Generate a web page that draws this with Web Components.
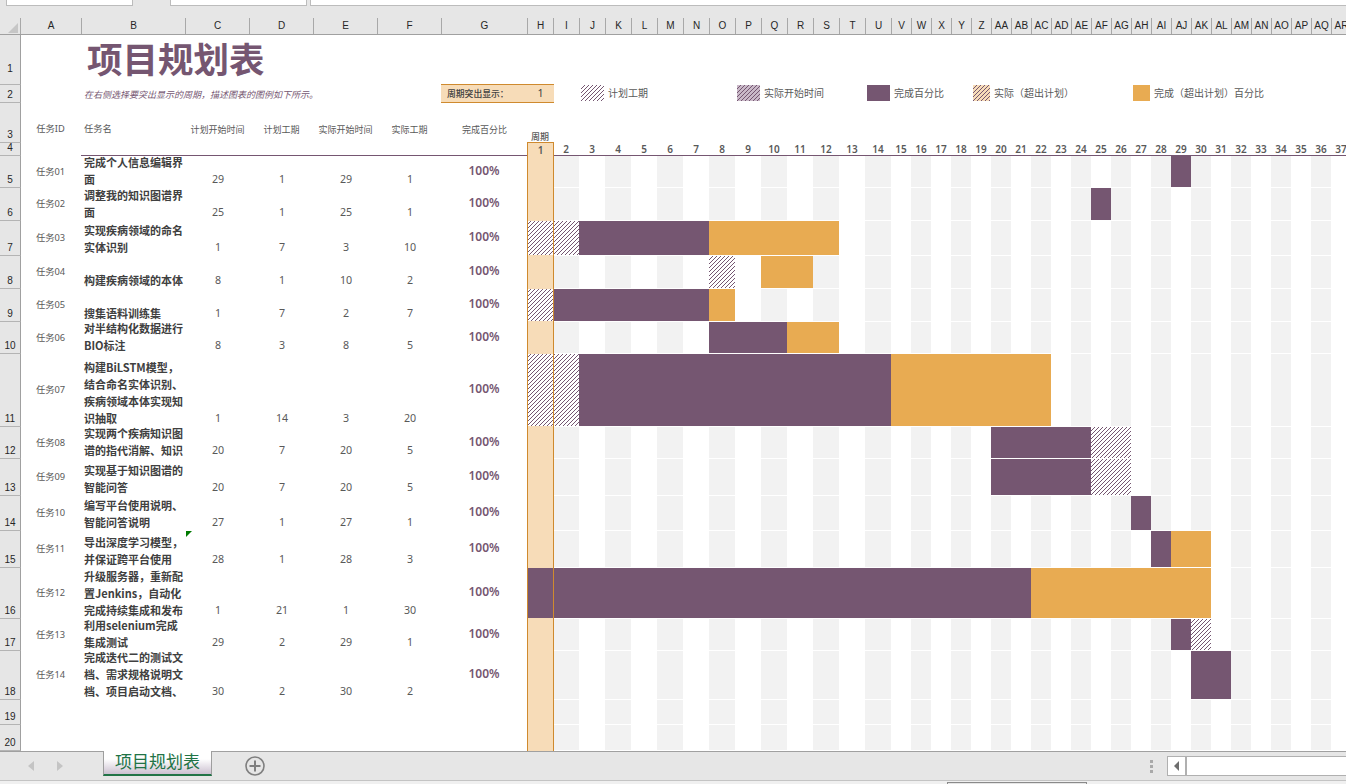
<!DOCTYPE html>
<html lang="zh">
<head>
<meta charset="utf-8">
<title>项目规划表</title>
<style>
    html, body { margin: 0; padding: 0; background: #fff; }
</style>
</head>
<body>
<sheet-app>
    <formula-strip></formula-strip>
    <column-header></column-header>

    <sheet-row num="1" h="50" label-pad="9">
        <sheet-cell col="3" kind="title">项目规划表</sheet-cell>
    </sheet-row>
    <sheet-row num="2" h="18">
        <sheet-cell col="3" kind="note">在右侧选择要突出显示的周期，描述图表的图例如下所示。</sheet-cell>
        <period-picker style="grid-column: 8 / span 2"></period-picker>
        <legend-item col="11" swatch="plan" w="23">计划工期</legend-item>
        <legend-item col="17" swatch="actual" w="23">实际开始时间</legend-item>
        <legend-item col="22" swatch="done" w="23">完成百分比</legend-item>
        <legend-item col="27" swatch="over" w="17">实际（超出计划）</legend-item>
        <legend-item col="35" swatch="overdone" w="17">完成（超出计划）百分比</legend-item>
    </sheet-row>
    <sheet-row num="3" h="40">
        <sheet-cell col="2" kind="head" align="center">任务ID</sheet-cell>
        <sheet-cell col="3" kind="head" align="left">任务名</sheet-cell>
        <sheet-cell col="4" kind="head2" align="center">计划开始时间</sheet-cell>
        <sheet-cell col="5" kind="head2" align="center">计划工期</sheet-cell>
        <sheet-cell col="6" kind="head2" align="center">实际开始时间</sheet-cell>
        <sheet-cell col="7" kind="head2" align="center">实际工期</sheet-cell>
        <sheet-cell col="8" kind="head2" align="center">完成百分比</sheet-cell>
        <sheet-cell col="9" kind="axis-title" align="center">周期</sheet-cell>
    </sheet-row>
    <sheet-row num="4" h="13">
        <period-axis style="grid-column: 3 / -1"></period-axis>
    </sheet-row>

    <gantt-row num="5" h="32" task="任务01" plan="29" dur="1" start="29" real="1" bars="solid:29-29">完成个人信息编辑界<br>面</gantt-row>
    <gantt-row num="6" h="33" task="任务02" plan="25" dur="1" start="25" real="1" bars="solid:25-25">调整我的知识图谱界<br>面</gantt-row>
    <gantt-row num="7" h="35" task="任务03" plan="1" dur="7" start="3" real="10" bars="hatch:1-2 solid:3-7 over:8-12">实现疾病领域的命名<br>实体识别</gantt-row>
    <gantt-row num="8" h="33" task="任务04" plan="8" dur="1" start="10" real="2" bars="hatch:8-8 over:10-11">构建疾病领域的本体</gantt-row>
    <gantt-row num="9" h="33" task="任务05" plan="1" dur="7" start="2" real="7" bars="hatch:1-1 solid:2-7 over:8-8">搜集语料训练集</gantt-row>
    <gantt-row num="10" h="32" task="任务06" plan="8" dur="3" start="8" real="5" bars="solid:8-10 over:11-12">对半结构化数据进行<br>BIO标注</gantt-row>
    <gantt-row num="11" h="73" task="任务07" plan="1" dur="14" start="3" real="20" bars="hatch:1-2 solid:3-14 over:15-22">构建BiLSTM模型，<br>结合命名实体识别、<br>疾病领域本体实现知<br>识抽取</gantt-row>
    <gantt-row num="12" h="32" task="任务08" plan="20" dur="7" start="20" real="5" bars="solid:20-24 hatch:25-26">实现两个疾病知识图<br>谱的指代消解、知识</gantt-row>
    <gantt-row num="13" h="37" task="任务09" plan="20" dur="7" start="20" real="5" bars="solid:20-24 hatch:25-26">实现基于知识图谱的<br>智能问答</gantt-row>
    <gantt-row num="14" h="35" task="任务10" plan="27" dur="1" start="27" real="1" bars="solid:27-27">编写平台使用说明、<br>智能问答说明</gantt-row>
    <gantt-row num="15" h="37" task="任务11" plan="28" dur="1" start="28" real="3" bars="solid:28-28 over:29-30" flagged>导出深度学习模型，<br>并保证跨平台使用</gantt-row>
    <gantt-row num="16" h="51" task="任务12" plan="1" dur="21" start="1" real="30" bars="solid:1-21 over:22-30">升级服务器，重新配<br>置Jenkins，自动化<br>完成持续集成和发布</gantt-row>
    <gantt-row num="17" h="32" task="任务13" plan="29" dur="2" start="29" real="1" bars="solid:29-29 hatch:30-30">利用selenium完成<br>集成测试</gantt-row>
    <gantt-row num="18" h="49" task="任务14" plan="30" dur="2" start="30" real="2" bars="solid:30-31">完成迭代二的测试文<br>档、需求规格说明文<br>档、项目启动文档、</gantt-row>
    <gantt-row num="19" h="25" empty></gantt-row>
    <gantt-row num="20" h="26" empty></gantt-row>

    <sheet-tabs></sheet-tabs>
</sheet-app>

<script>
// Excel style gantt sheet

const FONT = '"Noto Sans", "Noto Sans CJK SC", sans-serif';
const PURPLE = '#755671';
const ORANGE = '#e8ab52';
const PEACH = '#f7dcb8';
const EDGE = '#cf8a2e';

// 4px stair pattern used by every hatched fill
function hatchSvg(bg) {
    return `
        <svg width="100%" height="100%" style="display:block" shape-rendering="crispEdges">
            <defs>
                <pattern id="h" width="4" height="4" patternUnits="userSpaceOnUse">
                    <rect width="4" height="4" fill="${bg}"/>
                    <rect x="3" y="0" width="1" height="1" fill="${PURPLE}"/>
                    <rect x="2" y="1" width="1" height="1" fill="${PURPLE}"/>
                    <rect x="1" y="2" width="1" height="1" fill="${PURPLE}"/>
                    <rect x="0" y="3" width="1" height="1" fill="${PURPLE}"/>
                </pattern>
            </defs>
            <rect width="100%" height="100%" fill="url(#h)"/>
        </svg>`;
}

class SheetApp extends HTMLElement {
    constructor() {
        super();
        this.attachShadow({ mode: 'open' });
        this.shadowRoot.innerHTML = `
            <style>
                :host {
                    --track: repeat(14, 26px) repeat(23, 20px);
                    --cols: 20px 61px 104px 64px 64px 64px 64px 86px var(--track);
                    display: flex;
                    flex-direction: column;
                    width: 1346px;
                    height: 784px;
                    overflow: hidden;
                    background: #fff;
                    font-family: ${FONT};
                    color: #595959;
                }
            </style>
            <slot></slot>
        `;
    }
}

class FormulaStrip extends HTMLElement {
    constructor() {
        super();
        this.attachShadow({ mode: 'open' });
        this.shadowRoot.innerHTML = `
            <style>
                :host {
                    display: flex;
                    flex: none;
                    height: 18px;
                    background: #e6e6e6;
                    align-items: flex-start;
                }
                div {
                    height: 5px;
                    background: #fff;
                    border: 1px solid #bcbcbc;
                    border-top: none;
                    box-sizing: content-box;
                }
                .name { margin-left: 6px; width: 125px; }
                .fx { margin-left: 37px; width: 135px; }
                .input { margin-left: 3px; flex: 1; border-right: none; }
            </style>
            <div class="name"></div><div class="fx"></div><div class="input"></div>
        `;
    }
}

class ColumnHeader extends HTMLElement {
    constructor() {
        super();
        this.attachShadow({ mode: 'open' });
        const names = [];
        for (let i = 0; i < 44; i++) {
            names.push(i < 26 ? String.fromCharCode(65 + i) : 'A' + String.fromCharCode(65 + i - 26));
        }
        this.shadowRoot.innerHTML = `
            <style>
                :host {
                    display: grid;
                    flex: none;
                    grid-template-columns: var(--cols);
                    height: 17px;
                    background: #e6e6e6;
                    border-bottom: 1px solid #a0a0a0;
                    box-sizing: border-box;
                    font: 10px/16px "Liberation Sans", Arial, sans-serif;
                    color: #262626;
                }
                .corner { position: relative; }
                .corner svg { position: absolute; left: 8px; top: 5px; }
                span {
                    text-align: center;
                    border-left: 1px solid #a8a8a8;
                    white-space: nowrap;
                }
            </style>
            <div class="corner"><svg width="10" height="10"><polygon points="10,0 10,10 0,10" fill="#c6c6c6"/></svg></div>
            ${names.map(n => `<span>${n}</span>`).join('')}
        `;
    }
}

// One sheet row: the grey row number plus grid cells passed in by slot
class SheetRow extends HTMLElement {
    constructor() {
        super();
        this.attachShadow({ mode: 'open' });
    }

    connectedCallback() {
        const h = this.getAttribute('h');
        const pad = this.getAttribute('label-pad') || 1;
        this.shadowRoot.innerHTML = `
            <style>
                :host {
                    display: grid;
                    flex: none;
                    grid-template-columns: var(--cols);
                    grid-template-rows: ${h}px;
                    height: ${h}px;
                }
                .num {
                    grid-column: 1;
                    grid-row: 1;
                    width: 21px;
                    box-sizing: border-box;
                    background: #e6e6e6;
                    border-right: 1px solid #a0a0a0;
                    border-bottom: 1px solid #b4b4b4;
                    display: flex;
                    align-items: flex-end;
                    justify-content: center;
                    font: 10px/13px "Liberation Sans", Arial, sans-serif;
                    color: #262626;
                    padding-bottom: ${pad}px;
                    z-index: 2;
                }
            </style>
            <div class="num">${this.getAttribute('num')}</div>
            <slot></slot>
        `;
    }
}

class SheetCell extends HTMLElement {
    constructor() {
        super();
        this.attachShadow({ mode: 'open' });
        this.shadowRoot.innerHTML = `
            <style>
                :host {
                    display: flex;
                    grid-row: 1;
                    min-width: 0;
                    white-space: nowrap;
                    font-size: 10.67px;
                    line-height: 17px;
                    align-items: flex-end;
                }
                :host([align="center"]) { justify-content: center; }
                :host([kind="title"]) {
                    grid-column-end: span 6;
                    align-items: center;
                    padding: 0 0 5px 6px;
                    box-sizing: border-box;
                    font-size: 35.5px;
                    line-height: 40px;
                    font-weight: 700;
                    font-family: "Noto Sans CJK SC", sans-serif;
                    color: ${PURPLE};
                }
                :host([kind="note"]) {
                    grid-column-end: span 5;
                    align-items: center;
                    padding-left: 3px;
                    font-size: 9px;
                    line-height: 13px;
                    font-style: italic;
                    color: ${PURPLE};
                }
                :host([kind="head"]) {
                    font-size: 9.3px;
                    line-height: 13px;
                    padding-bottom: 8px;
                }
                :host([kind="head"][align="left"]) { padding-left: 3px; }
                :host([kind="head2"]) {
                    font-size: 9px;
                    line-height: 13px;
                    padding-bottom: 7px;
                    padding-left: 1px;
                }
                :host([kind="axis-title"]) {
                    font-size: 9px;
                    font-weight: 500;
                    line-height: 13px;
                }
                :host([kind="id"]) {
                    align-items: center;
                    justify-content: center;
                    padding-bottom: 2px;
                    font-size: 9.3px;
                }
                :host([kind="name"]) {
                    overflow: hidden;
                    padding-left: 3px;
                    color: #404040;
                    font-size: 11px;
                    font-weight: 600;
                    font-family: "Noto Sans CJK SC", sans-serif;
                }
                :host([kind="num"]) { justify-content: center; padding-left: 2px; }
                :host([kind="pct"]) {
                    align-items: center;
                    justify-content: center;
                    padding-bottom: 4px;
                    font-size: 12px;
                    font-weight: 600;
                    color: ${PURPLE};
                }
            </style>
            <div><slot></slot></div>
        `;
    }

    connectedCallback() {
        const col = this.getAttribute('col');
        if (col) this.style.gridColumnStart = col;
    }
}

class PeriodPicker extends HTMLElement {
    constructor() {
        super();
        this.attachShadow({ mode: 'open' });
        this.shadowRoot.innerHTML = `
            <style>
                :host {
                    display: grid;
                    grid-row: 1;
                    grid-template-columns: 86px 27px;
                    margin: -1px -1px 0 0;
                    background: ${PEACH};
                    border-top: 1px solid ${EDGE};
                    border-bottom: 1px solid ${EDGE};
                    box-sizing: border-box;
                    align-items: center;
                    white-space: nowrap;
                    z-index: 1;
                    color: #404040;
                }
                .label { padding-left: 6px; font-size: 8.8px; font-weight: 500; }
                .value { text-align: center; font-size: 10.67px; padding-bottom: 2px; }
            </style>
            <span class="label">周期突出显示：</span><span class="value">1</span>
        `;
    }
}

class LegendItem extends HTMLElement {
    constructor() {
        super();
        this.attachShadow({ mode: 'open' });
    }

    connectedCallback() {
        this.style.gridColumnStart = this.getAttribute('col');
        const kind = this.getAttribute('swatch');
        const fills = {
            plan: hatchSvg('#ffffff'),
            actual: hatchSvg('#c9b9c8'),
            over: hatchSvg(PEACH),
            done: `<svg width="100%" height="100%" style="display:block"><rect width="100%" height="100%" fill="${PURPLE}"/></svg>`,
            overdone: `<svg width="100%" height="100%" style="display:block"><rect width="100%" height="100%" fill="${ORANGE}"/></svg>`
        };
        this.shadowRoot.innerHTML = `
            <style>
                :host {
                    display: flex;
                    grid-row: 1;
                    grid-column-end: span 1;
                    align-items: center;
                    white-space: nowrap;
                    font-size: 10px;
                    line-height: 14px;
                    color: #595959;
                    min-width: 0;
                    padding-bottom: 2px;
                    box-sizing: border-box;
                }
                .swatch {
                    flex: none;
                    width: ${this.getAttribute('w')}px;
                    height: 16px;
                    margin: 0 4px 0 2px;
                }
            </style>
            <div class="swatch">${fills[kind]}</div><slot></slot>
        `;
    }
}

class PeriodAxis extends HTMLElement {
    constructor() {
        super();
        this.attachShadow({ mode: 'open' });
        let cells = '';
        for (let i = 1; i <= 37; i++) {
            cells += `<span class="${i === 1 ? 'first' : ''}">${i}</span>`;
        }
        this.shadowRoot.innerHTML = `
            <style>
                :host {
                    display: grid;
                    grid-row: 1;
                    grid-template-columns: 446px var(--track);
                    grid-template-rows: 12px;
                    border-bottom: 1px solid ${PURPLE};
                    font-size: 10px;
                    font-weight: 600;
                    line-height: 12px;
                    color: #595959;
                    white-space: nowrap;
                }
                i { display: block; }
                span { text-align: center; }
                .first {
                    background: ${PEACH};
                    margin-right: -1px;
                    margin-bottom: -1px;
                    margin-top: -1px;
                    padding-top: 1px;
                    box-sizing: border-box;
                    border: 1px solid ${EDGE};
                    border-bottom: none;
                }
            </style>
            <i></i>${cells}
        `;
    }
}

class GanttBar extends HTMLElement {
    constructor() {
        super();
        this.attachShadow({ mode: 'open' });
    }

    connectedCallback() {
        const kind = this.getAttribute('kind');
        const from = +this.getAttribute('from');
        const to = +this.getAttribute('to');
        this.style.gridColumn = `${from} / ${to + 1}`;
        const bg = { solid: PURPLE, over: ORANGE, hatch: '#fff' }[kind];
        this.shadowRoot.innerHTML = `
            <style>
                :host {
                    display: block;
                    grid-row: 1;
                    margin-bottom: 1px;
                    background: ${bg};
                    overflow: hidden;
                    min-width: 0;
                }
            </style>
            ${kind === 'hatch' ? hatchSvg('#ffffff') : ''}
        `;
    }
}

class GanttTrack extends HTMLElement {
    constructor() {
        super();
        this.attachShadow({ mode: 'open' });
    }

    connectedCallback() {
        let cells = '';
        for (let i = 1; i <= 37; i++) {
            if (i === 1) cells += `<div class="peach" style="grid-column:1"></div>`;
            else if (i % 2 === 0) cells += `<div class="zebra" style="grid-column:${i}"></div>`;
        }
        const bars = (this.getAttribute('bars') || '').split(' ').filter(Boolean).map(b => {
            const [kind, range] = b.split(':');
            const [from, to] = range.split('-');
            return `<gantt-bar kind="${kind}" from="${from}" to="${to}"></gantt-bar>`;
        }).join('');
        this.shadowRoot.innerHTML = `
            <style>
                :host {
                    display: grid;
                    grid-row: 1;
                    grid-template-columns: var(--track);
                    grid-template-rows: 100%;
                    min-width: 0;
                }
                .zebra, .peach, .edge { grid-row: 1; }
                .zebra { background: #f2f2f2; margin-bottom: 1px; }
                .peach { background: ${PEACH}; }
                .edge {
                    grid-column: 1;
                    margin-right: -1px;
                    border-left: 1px solid ${EDGE};
                    border-right: 1px solid ${EDGE};
                    z-index: 1;
                }
            </style>
            ${cells}${bars}<div class="edge"></div>
        `;
    }
}

class GanttRow extends HTMLElement {
    constructor() {
        super();
        this.attachShadow({ mode: 'open' });
    }

    connectedCallback() {
        const a = n => this.getAttribute(n) || '';
        const empty = this.hasAttribute('empty');
        // the small green error flag only shows up on one row
        const flag = this.hasAttribute('flagged')
            ? `<svg class="flag" width="6" height="6"><polygon points="0,0 6,0 0,6" fill="#007a00"/></svg>` : '';
        const fields = empty ? '' : `
            <sheet-cell col="2" kind="id">${a('task')}</sheet-cell>
            <sheet-cell col="3" kind="name"><slot></slot></sheet-cell>
            <sheet-cell col="4" kind="num" class="flagged">${a('plan')}${flag}</sheet-cell>
            <sheet-cell col="5" kind="num">${a('dur')}</sheet-cell>
            <sheet-cell col="6" kind="num">${a('start')}</sheet-cell>
            <sheet-cell col="7" kind="num">${a('real')}</sheet-cell>
            <sheet-cell col="8" kind="pct">100%</sheet-cell>`;
        this.shadowRoot.innerHTML = `
            <style>
                :host { display: block; flex: none; }
                .flagged { position: relative; }
                .flag { position: absolute; left: 1px; top: 0; }
                gantt-track { grid-column: 9 / -1; }
            </style>
            <sheet-row num="${a('num')}" h="${a('h')}">
                ${fields}
                <gantt-track bars="${a('bars')}"></gantt-track>
            </sheet-row>
        `;
    }
}

class SheetTabs extends HTMLElement {
    constructor() {
        super();
        this.attachShadow({ mode: 'open' });
        this.shadowRoot.innerHTML = `
            <style>
                :host {
                    display: block;
                    flex: none;
                    height: 33px;
                    background: #e6e6e6;
                    box-sizing: border-box;
                    border-top: 1px solid #a0a0a0;
                }
                .bar {
                    display: flex;
                    height: 28px;
                    border-bottom: 1px solid #c4c4c4;
                    box-sizing: content-box;
                    align-items: center;
                }
                .nav { flex: none; display: block; }
                .nav.prev { margin-left: 28px; }
                .nav.next { margin-left: 23px; }
                .tab {
                    flex: none;
                    align-self: flex-start;
                    width: 109px;
                    height: 25px;
                    margin-left: 40px;
                    margin-top: -1px;
                    box-sizing: border-box;
                    border-left: 1px solid #9e9e9e;
                    border-right: 1px solid #9e9e9e;
                    border-bottom: 2px solid #217346;
                    background: linear-gradient(#fff 0, #fff 35%, #cbc0d0 100%);
                    padding-left: 11px;
                    font-size: 17px;
                    line-height: 20px;
                    font-family: "Noto Sans CJK SC", sans-serif;
                    color: #217346;
                    white-space: nowrap;
                }
                .add { flex: none; margin-left: 33px; display: block; }
                .dots {
                    flex: none;
                    margin-left: 885px;
                    display: flex;
                    flex-direction: column;
                    gap: 2px;
                }
                .dots i { display: block; width: 3px; height: 3px; background: #a9a9a9; }
                .scroll-btn {
                    flex: none;
                    width: 19px;
                    height: 20px;
                    margin-left: 14px;
                    box-sizing: border-box;
                    background: #fff;
                    border: 1px solid #b0b0b0;
                    display: flex;
                    align-items: center;
                    justify-content: center;
                }
                .scroll-track {
                    flex: 1;
                    height: 20px;
                    box-sizing: border-box;
                    background: #fff;
                    border: 1px solid #b0b0b0;
                    border-right: none;
                }
                .status { display: flex; height: 3px; background: #f0f0f0; }
                .status div {
                    margin: 1px 0 0 947px;
                    width: 140px;
                    box-sizing: border-box;
                    border: 1px solid #8a8a8a;
                    border-bottom: none;
                    background: #e6e6e6;
                }
            </style>
            <div class="bar">
                <svg class="nav prev" width="6" height="10"><polygon points="6,0 6,10 0,5" fill="#c4c4c4"/></svg>
                <svg class="nav next" width="6" height="10"><polygon points="0,0 0,10 6,5" fill="#c4c4c4"/></svg>
                <div class="tab">项目规划表</div>
                <svg class="add" width="20" height="20" viewBox="0 0 20 20">
                    <circle cx="10" cy="10" r="9" fill="none" stroke="#7f7f7f" stroke-width="1.6"/>
                    <path d="M10 4.5v11M4.5 10h11" stroke="#7f7f7f" stroke-width="2" fill="none"/>
                </svg>
                <div class="dots"><i></i><i></i><i></i></div>
                <div class="scroll-btn"><svg width="6" height="10"><polygon points="5,0 5,10 0,5" fill="#6e6e6e"/></svg></div>
                <div class="scroll-track"></div>
            </div>
            <div class="status"><div></div></div>
        `;
    }
}

// children first, so the parents find them defined when they render
customElements.define('gantt-bar', GanttBar);
customElements.define('gantt-track', GanttTrack);
customElements.define('sheet-cell', SheetCell);
customElements.define('sheet-row', SheetRow);
customElements.define('gantt-row', GanttRow);
customElements.define('period-picker', PeriodPicker);
customElements.define('legend-item', LegendItem);
customElements.define('period-axis', PeriodAxis);
customElements.define('formula-strip', FormulaStrip);
customElements.define('column-header', ColumnHeader);
customElements.define('sheet-tabs', SheetTabs);
customElements.define('sheet-app', SheetApp);
</script>
</body>
</html>
